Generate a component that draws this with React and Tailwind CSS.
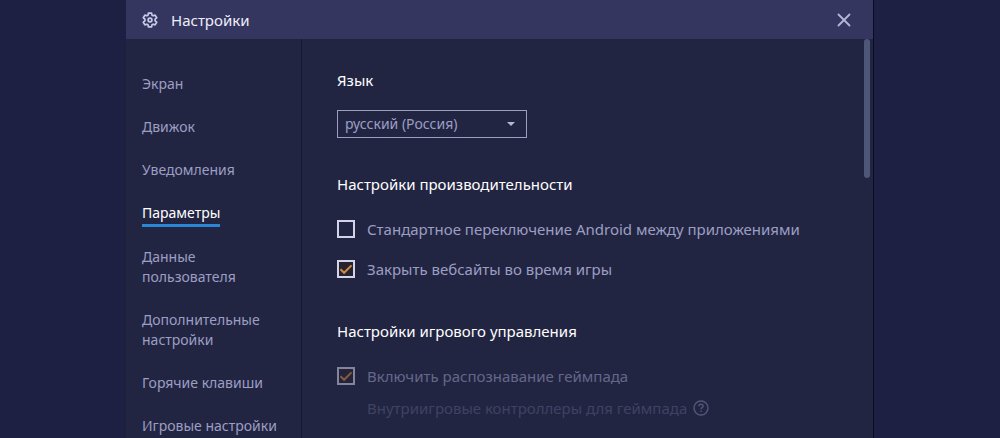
import { X } from 'lucide-react';

const menuItems = [
  { label: 'Экран' },
  { label: 'Движок' },
  { label: 'Уведомления' },
  { label: 'Параметры', active: true },
  { label: 'Данные пользователя' },
  { label: 'Дополнительные настройки' },
  { label: 'Горячие клавиши' },
  { label: 'Игровые настройки' },
];

const GearIcon = () => (
  <svg
    viewBox="0 0 16 16"
    className="w-4 h-4 text-[#c9cae8]"
    fill="none"
    stroke="currentColor"
    strokeWidth="1.7"
    strokeLinejoin="round"
    aria-hidden="true"
  >
    <path d="M6.4 1.2h3.2l.4 2 1.1.6 2-.7 1.6 2.7-1.6 1.4v1.6l1.6 1.4-1.6 2.7-2-.7-1.1.6-.4 2H6.4l-.4-2-1.1-.6-2 .7-1.6-2.7 1.6-1.4V7.2L1.3 5.8l1.6-2.7 2 .7L6 3.200z" />
    <circle cx="8" cy="8" r="1.9" />
  </svg>
);

const HelpIcon = () => (
  <svg
    viewBox="0 0 16 16"
    className="w-4 h-4 text-[#53567a]"
    fill="none"
    stroke="currentColor"
    strokeWidth="1.4"
    aria-hidden="true"
  >
    <circle cx="8" cy="8" r="7" />
    <path d="M5.9 6.3c0-1.2.9-2 2.100-2s2.100.8 2.100 1.900c0 1.400-2.100 1.500-2.100 3.100" />
    <path d="M8 10.6v1.5" />
  </svg>
);

const CheckOption = ({ label, checked = false, disabled = false }) => (
  <label className={`flex items-center gap-3 ${disabled ? 'opacity-55' : ''}`}>
    <span className="relative w-[18px] h-[18px] shrink-0">
      <input
        type="checkbox"
        defaultChecked={checked}
        disabled={disabled}
        className="peer block appearance-none w-[18px] h-[18px] border-2 border-[#d3d4ea] checked:bg-[#26232f]"
      />
      <svg
        viewBox="0 0 18 18"
        className="absolute inset-0 hidden peer-checked:block pointer-events-none"
        fill="none"
        stroke="#cf8a45"
        strokeWidth="2"
        aria-hidden="true"
      >
        <path d="M3.5 9.2l3.6 3.6 7.4-7.4" />
      </svg>
    </span>
    <span>{label}</span>
  </label>
);

const Sidebar = () => (
  <nav className="w-[176px] shrink-0 border-r border-[#14163a] pt-[35px] px-4">
    <ul className="flex flex-col gap-[23px]">
      {menuItems.map((item) => (
        <li key={item.label} className="flex">
          <a
            href="#"
            aria-current={item.active ? 'page' : undefined}
            className={
              item.active
                ? 'text-white border-b-3 border-[#2b86d4] pb-px -mb-[3px]'
                : 'text-[#9c9ec2]'
            }
          >
            {item.label}
          </a>
        </li>
      ))}
    </ul>
  </nav>
);

const App = () => {
  return (
    <div className="min-h-screen bg-[#1d2042] font-['Noto_Sans','Open_Sans',sans-serif] text-sm leading-5">
      <div className="flex flex-col min-h-screen w-full max-w-[748px] mx-auto bg-[#222542] border-r border-[#0b0c24]">
        {/* Title bar */}
        <header className="flex items-center h-[39px] pl-4 pr-[18px] bg-[#34365f]">
          <GearIcon />
          <h1 className="ml-[13px] text-[15px] leading-5 text-[#eeeefa]">Настройки</h1>
          <button type="button" aria-label="Закрыть" className="ml-auto text-[#b4b5d8]">
            <X className="w-[22px] h-[22px]" strokeWidth={2} />
          </button>
        </header>

        <div className="flex flex-1">
          <Sidebar />

          <main className="flex-1 pt-[31px] pl-[35px] text-[15px] leading-5 text-[#9c9ec2]">
            {/* Language */}
            <section>
              <h2 className="text-white">
                <label htmlFor="language">Язык</label>
              </h2>
              <div className="relative w-[190px] mt-5">
                <select
                  id="language"
                  className="block appearance-none w-full h-7 pl-[7px] border border-[#9c9ec2] bg-transparent text-sm"
                >
                  <option>русский (Россия)</option>
                </select>
                <svg
                  viewBox="0 0 8 4"
                  className="absolute right-3 top-3 w-2 h-1 pointer-events-none"
                  fill="#b4b5d8"
                  aria-hidden="true"
                >
                  <path d="M0 0h8L4 4z" />
                </svg>
              </div>
            </section>

            {/* Performance */}
            <section className="mt-9">
              <h2 className="text-white">Настройки производительности</h2>
              <div className="flex flex-col gap-5 mt-[25px]">
                <CheckOption label="Стандартное переключение Android между приложениями" />
                <CheckOption label="Закрыть вебсайты во время игры" checked />
              </div>
            </section>

            {/* Game controls */}
            <section className="mt-[42px]">
              <h2 className="text-white">Настройки игрового управления</h2>
              <div className="mt-[25px]">
                <CheckOption label="Включить распознавание геймпада" checked disabled />
              </div>
              <div className="flex items-center gap-[6px] mt-3 ml-[30px] text-[#3f4263]">
                Внутриигровые контроллеры для геймпада
                <HelpIcon />
              </div>
            </section>
          </main>

          {/* Scrollbar */}
          <div className="w-[9px] shrink-0">
            <div className="w-[6px] h-[139px] rounded-full bg-[#4f5779]"></div>
          </div>
        </div>
      </div>
    </div>
  );
};

export default App;
